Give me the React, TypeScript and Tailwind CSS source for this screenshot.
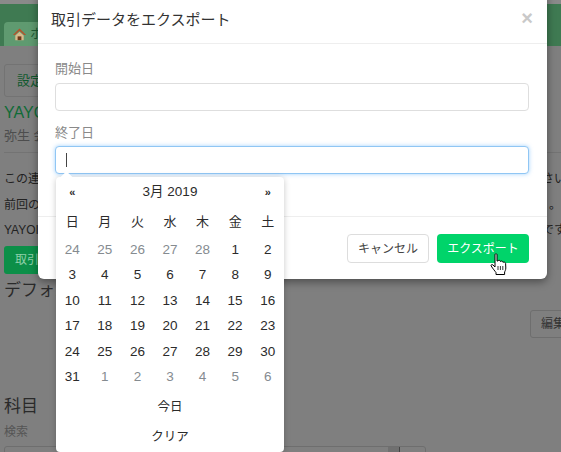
const days = [
  [24, 25, 26, 27, 28, 1, 2],
  [3, 4, 5, 6, 7, 8, 9],
  [10, 11, 12, 13, 14, 15, 16],
  [17, 18, 19, 20, 21, 22, 23],
  [24, 25, 26, 27, 28, 29, 30],
  [31, 1, 2, 3, 4, 5, 6],
];
const weekdays = ["日", "月", "火", "水", "木", "金", "土"];

function isMuted(row: number, day: number) {
  return (row === 0 && day > 20) || (row === 5 && day < 20);
}

function HomeIcon() {
  return (
    <svg viewBox="0 0 16 16" className="w-[15px] h-[15px] shrink-0">
      <path d="M8 1.5 L15 8.5 L13 8.5 L8 4 L3 8.5 L1 8.5 Z" fill="#b5512a" />
      <path d="M3.5 9 L8 5 L12.5 9 L12.5 14 L3.5 14 Z" fill="#d9b98a" />
      <rect x="6" y="10" width="4" height="4" fill="#6e3a1c" />
    </svg>
  );
}

function HandCursor() {
  return (
    <svg viewBox="0 0 17 23" className="w-[17px] h-[23px]">
      <path
        d="M5 1.5 C5 0.6 7 0.6 7 1.5 L7 8 L8 8 C8.2 7 10 7 10.2 8 L10.5 8.6 C10.8 7.8 12.4 7.8 12.7 8.8 L13 9.4 C13.4 8.8 15.5 9 15.6 10.4 L15.8 15 C15.8 17 15 18 14.6 19 L14.6 21.5 L6 21.5 L6 19.6 C5 18 3 16 1.2 13 C0.6 11.8 2 11 3 12 L5 14 Z"
        fill="#fff"
        stroke="#000"
        strokeWidth="1"
        strokeLinejoin="round"
      />
      <path d="M8 13 L8 17 M10.4 13 L10.4 17 M12.8 13 L12.8 17" stroke="#000" strokeWidth="0.8" />
    </svg>
  );
}

function DatePicker() {
  return (
    <div className="absolute left-[18px] top-[185px] w-[228px] h-[275px] bg-white rounded-[4px] text-[13.5px] text-[#2b2b2b] shadow-[0_1px_6px_rgba(0,0,0,0.22)]">
      <div className="absolute left-[6px] -top-[4px] w-[9px] h-[9px] rotate-45 bg-white" />
      <div className="relative flex items-center h-[30px] pt-[1px]">
        <span className="w-[32.57px] text-center text-[11px] font-bold leading-none">«</span>
        <span className="flex-1 text-center">3月 2019</span>
        <span className="w-[32.57px] text-center text-[11px] font-bold leading-none">»</span>
      </div>
      <div className="grid grid-cols-7 h-[30px] items-center">
        {weekdays.map((w) => (
          <span key={w} className="text-center text-[13px]">{w}</span>
        ))}
      </div>
      {days.map((row, r) => (
        <div key={r} className="grid grid-cols-7 h-[25.5px] items-center">
          {row.map((d, i) => (
            <span key={i} className={`text-center ${isMuted(r, d) ? "text-[#858b90]" : ""}`}>
              {d}
            </span>
          ))}
        </div>
      ))}
      <div className="text-center text-[12.5px] mt-[2px] h-[30px] leading-[30px]">今日</div>
      <div className="text-center text-[12.5px] h-[30px] leading-[30px]">クリア</div>
    </div>
  );
}

function ExportModal() {
  return (
    <div className="absolute left-[38px] top-[-8px] w-[509px] h-[287px] bg-white rounded-b-[6px] shadow-[0_3px_9px_rgba(0,0,0,0.4)]">
      <div className="flex items-center justify-between h-[52px] pt-[6px] pl-[13px] pr-[14px] border-b border-[#eeeeee]">
        <h2 className="text-[15px] text-[#333]">取引データをエクスポート</h2>
        <span className="text-[20px] font-bold leading-none text-[#c9c9c9] mb-[6px]">×</span>
      </div>
      <div className="pl-[17px] pr-[18px] pt-[16px] h-[173px] border-b border-[#eeeeee]">
        <label className="block text-[13px] text-[#8a8a8a] h-[23px] leading-[17px]">開始日</label>
        <div className="h-[28px] rounded-[4px] border border-[#dedede] bg-white" />
        <label className="block mt-[11px] text-[13px] text-[#8a8a8a] h-[24px] leading-[21px]">終了日</label>
        <div className="flex items-center h-[28px] pl-[10px] rounded-[4px] border border-[#90c6f4] bg-white shadow-[0_0_4px_rgba(100,180,250,0.6)]">
          <span className="w-px h-[14px] bg-[#444]" />
        </div>
      </div>
      <div className="flex justify-end items-start gap-[8px] pt-[17px] pr-[18px]">
        <button className="w-[82px] h-[29px] rounded-[4px] border border-[#dddddd] bg-white text-[12px] text-[#444]">キャンセル</button>
        <button className="w-[92px] h-[29px] rounded-[4px] bg-[#00d46a] text-[12px] text-white">エクスポート</button>
      </div>
      <DatePicker />
      <div className="absolute left-[452px] top-[261px]">
        <HandCursor />
      </div>
    </div>
  );
}

export default function App() {
  return (
    <div className="relative w-[561px] h-[452px] overflow-hidden bg-[#7f7f7f] text-[#2a2a2a] font-['Liberation_Sans','Noto_Sans_CJK_JP',sans-serif]">
      {/* dimmed page behind the modal */}
      <div className="h-[4px] bg-[#8a8a8a]" />
      <div className="flex items-end h-[42px] pl-[4px] bg-[#3f7a52]">
        <div className="flex items-center gap-[3px] w-[60px] h-[24px] pl-[8px] rounded-t-[4px] bg-[#5f9a70] text-[13px] text-[#1e5c33] whitespace-nowrap overflow-hidden">
          <HomeIcon />
          <span>ホーム</span>
        </div>
      </div>
      <div className="pl-[4px] pt-[18px]">
        <div className="flex items-center w-[60px] h-[33px] pl-[12px] rounded-[3px] border border-[#737373] text-[13px] text-[#10592e]">設定</div>
        <div className="mt-[5px] text-[16px] leading-[22px] text-[#0f6b37]">YAYOI</div>
        <div className="mt-[3px] text-[13px] leading-[18px] text-[#4d4d4d]">弥生 会計</div>
        <div className="mt-[7px] border-t border-[#737373]" />
        <div className="mt-[17px] flex justify-between text-[12px] leading-[18px] text-[#222] mr-[-5px]">
          <span>この連携</span>
          <span>さい</span>
        </div>
        <div className="mt-[8px] flex justify-between text-[12px] leading-[18px] text-[#222]">
          <span>前回の</span>
          <span>。</span>
        </div>
        <div className="mt-[7px] flex justify-between text-[12px] leading-[18px] text-[#222] mr-[-5px]">
          <span>YAYOI</span>
          <span>です</span>
        </div>
        <div className="mt-[7px] flex items-center w-[60px] h-[28px] pl-[11px] rounded-[3px] bg-[#0c8f48] text-[12px] text-[#8fd0aa]">取引</div>
        <div className="mt-[4px] flex justify-between items-start mr-[-9px]">
          <span className="text-[17px] leading-[26px]">デフォルト</span>
          <span className="mt-[32px] flex items-center w-[40px] h-[28px] pl-[10px] rounded-[3px] border border-[#6e6e6e] text-[12px] text-[#333]">編集</span>
        </div>
        <div className="mt-[56px] text-[17px] leading-[26px]">科目</div>
        <div className="mt-[4px] text-[12px] leading-[16px] text-[#555]">検索</div>
        <div className="mt-[6px] flex justify-end w-[422px] h-[24px] pr-[25px] rounded-[3px] border border-[#6e6e6e]">
          <span className="w-[12px] h-full bg-[#707070] border-r border-[#444]" />
        </div>
      </div>
      <ExportModal />
    </div>
  );
}
